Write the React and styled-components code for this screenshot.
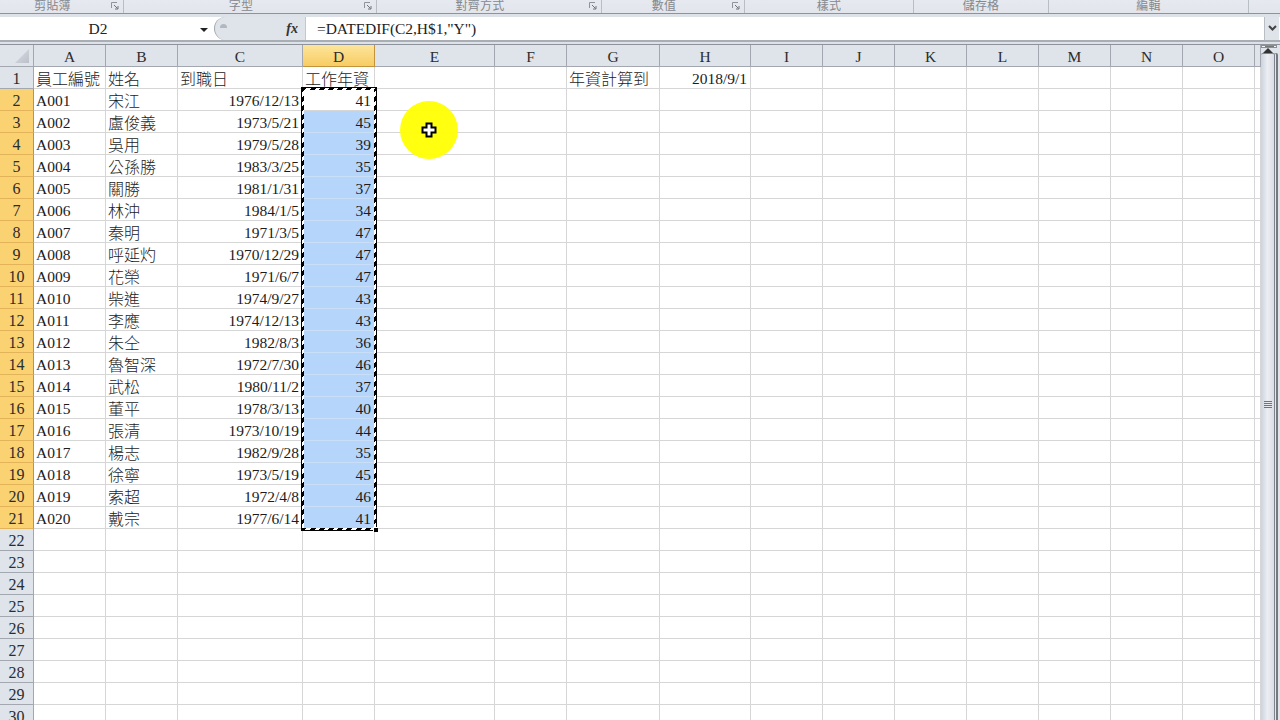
import React from "react";
import styled, { createGlobalStyle } from "styled-components";

const GlobalStyle = createGlobalStyle`
  html, body {
    margin: 0;
    padding: 0;
    background: #fff;
  }
`;

const LATIN = `"Liberation Serif", "Noto Sans CJK TC", serif`;
const CJK = `"Noto Sans CJK TC", "Liberation Serif", sans-serif`;

const Window = styled.div`
  position: relative;
  width: 1280px;
  height: 720px;
  overflow: hidden;
  display: flex;
  flex-direction: column;
  background: #fff;
  color: #000;
`;

const Ribbon = styled.div`
  display: flex;
  height: 13px;
  overflow: hidden;
  background: linear-gradient(#e6e9ef, #e2e5eb);
  border-bottom: 1px solid #8e939b;
`;

const RibbonGroup = styled.div`
  position: relative;
  box-sizing: border-box;
  width: ${(p) => p.$width}px;
  padding-right: ${(p) => (p.$launcher ? 18 : 0)}px;
  display: flex;
  justify-content: center;
  align-items: flex-end;
  border-right: 1px solid #b9bdc4;
  font: 12px/17px ${CJK};
  color: #85888e;
  letter-spacing: 0.2px;
  &:last-child {
    border-right: 0;
    flex: 1;
  }
`;

const Launcher = styled.svg`
  position: absolute;
  right: 4px;
  top: 2px;
  width: 8px;
  height: 8px;
`;

const FormulaBar = styled.div`
  height: 31px;
  box-sizing: border-box;
  padding-top: 3px;
  display: flex;
  background: #dde1e8;
  border-bottom: 1px solid #8e939b;
`;

const FormulaRow = styled.div`
  flex: 1;
  height: 23px;
  display: flex;
  background: #fff;
  border-bottom: 2px solid #a9adb4;
`;

const NameBox = styled.div`
  position: relative;
  width: 214px;
  box-sizing: border-box;
  padding-right: 18px;
  display: flex;
  align-items: center;
  justify-content: center;
  font: 15.5px ${LATIN};
  color: #222;
`;

const NameArrow = styled.span`
  position: absolute;
  right: 6px;
  top: 11px;
  border-left: 4px solid transparent;
  border-right: 4px solid transparent;
  border-top: 4px solid #222;
`;

const FxPanel = styled.div`
  width: 92px;
  display: flex;
  align-items: center;
  justify-content: flex-end;
  padding-right: 7px;
  box-sizing: border-box;
  background: #dfe3ea;
  border-left: 1px solid #a3a7ae;
  border-radius: 12px 0 0 12px;
  border-right: 1px solid #c3c7ce;
`;

const GripDot = styled.span`
  width: 7px;
  height: 4px;
  margin: 0 auto 5px 5px;
  border-radius: 4px 4px 0 0;
  background: #b3b8c0;
`;

const FxIcon = styled.span`
  font: italic bold 14px ${LATIN};
  color: #333;
`;

const FormulaInput = styled.div`
  flex: 1;
  padding-left: 11px;
  display: flex;
  align-items: center;
  font: 15.5px ${LATIN};
  letter-spacing: -0.05px;
  color: #222;
`;

const ExpandButton = styled.div`
  width: 14px;
  margin-right: 1px;
  display: flex;
  align-items: center;
  justify-content: center;
  background: #dfe3ea;
  border-left: 1px solid #b9bdc4;
`;

const SheetArea = styled.div`
  display: flex;
  flex: 1;
  min-height: 0;
`;

const Sheet = styled.div`
  position: relative;
  width: 1260px;
  display: grid;
  grid-template-columns: 34px 72px 72px 125px 72px 120px 72px 93px 91px 72px 72px 72px 72px 72px 72px 72px 6px;
  grid-auto-rows: 22px;
`;

const Corner = styled.div`
  display: flex;
  align-items: flex-end;
  justify-content: flex-end;
  padding: 0 4px 3px 0;
  background: #dfe3ea;
  border-right: 1px solid #a2a7b0;
  border-bottom: 1px solid #a2a7b0;
`;

const CornerMark = styled.span`
  width: 14px;
  height: 14px;
  background: linear-gradient(135deg, #d8dce3, #bcc1c9);
  clip-path: polygon(100% 0, 100% 100%, 0 100%);
`;

const ColHead = styled.div`
  display: flex;
  align-items: center;
  justify-content: center;
  padding-top: 3px;
  font: 15.5px/16px ${LATIN};
  color: #2c2c2c;
  background: ${(p) =>
    p.$active ? "linear-gradient(#fce59c, #f8cc62)" : "#dfe3ea"};
  border-right: 1px solid ${(p) => (p.$active ? "#c2933d" : "#a2a7b0")};
  border-bottom: 1px solid ${(p) => (p.$active ? "#c2933d" : "#a2a7b0")};
`;

const RowHead = styled.div`
  display: flex;
  align-items: flex-end;
  justify-content: center;
  font: 16px/18px ${LATIN};
  color: #2c2c2c;
  background: ${(p) => (p.$active ? "#fbd272" : "#dfe3ea")};
  border-right: 1px solid ${(p) => (p.$active ? "#c2933d" : "#a2a7b0")};
  border-bottom: 1px solid ${(p) => (p.$active ? "#e2b358" : "#a2a7b0")};
`;

const Cell = styled.div`
  box-sizing: border-box;
  min-width: 0;
  display: flex;
  align-items: flex-end;
  justify-content: ${(p) => (p.$right ? "flex-end" : "flex-start")};
  padding: 0 ${(p) => (p.$right ? 3 : 0)}px 0 ${(p) => (p.$right ? 0 : 2)}px;
  white-space: nowrap;
  font: ${(p) => (p.$cjk ? `16px/19px ${CJK}` : `15.5px/18px ${LATIN}`)};
  font-weight: ${(p) => (p.$cjk ? 300 : 400)};
  color: #1c1c1c;
  background: ${(p) => (p.$selected ? "#b5d5fb" : "transparent")};
  border-right: 1px solid ${(p) => (p.$selected ? "#b5d5fb" : "#d6d6d6")};
  border-bottom: 1px solid ${(p) => (p.$selected ? "#c9def7" : "#d6d6d6")};
`;

const Marching = styled.div`
  position: absolute;
  grid-column: 5 / 6;
  grid-row: 3 / 23;
  inset: -2px;
  pointer-events: none;
  border: 1px solid #000;
  background-image:
    repeating-linear-gradient(135deg, #000 0 3.5px, #fff 3.5px 6.5px),
    repeating-linear-gradient(135deg, #000 0 3.5px, #fff 3.5px 6.5px),
    repeating-linear-gradient(135deg, #000 0 3.5px, #fff 3.5px 6.5px),
    repeating-linear-gradient(135deg, #000 0 3.5px, #fff 3.5px 6.5px);
  background-size: 100% 2px, 100% 2px, 2px 100%, 2px 100%;
  background-position: top, bottom, left, right;
  background-repeat: no-repeat;
`;

const FillHandle = styled.span`
  position: absolute;
  right: -2px;
  bottom: -2px;
  width: 4px;
  height: 4px;
  background: #000;
  border: 1px solid #fff;
  border-right: 0;
  border-bottom: 0;
`;

const Spotlight = styled.div`
  position: absolute;
  left: 400px;
  top: 101px;
  width: 58px;
  height: 58px;
  border-radius: 50%;
  display: flex;
  align-items: center;
  justify-content: center;
  background: rgba(255, 255, 0, 0.94);
`;

const Scrollbar = styled.div`
  width: 20px;
  display: flex;
  flex-direction: column;
  overflow: hidden;
  background: #dfe3ea;
  border-left: 1px solid #74787f;
  box-sizing: border-box;
`;

const SplitBox = styled.div`
  height: 6px;
  margin-right: 3px;
  display: flex;
  align-items: center;
  justify-content: center;
  background: #f3f5f8;
  border: 1px solid #8a8f97;
`;

const SplitDash = styled.span`
  width: 9px;
  height: 1px;
  background: #777;
`;

const ArrowUp = styled.div`
  height: 17px;
  padding-right: 6px;
  display: flex;
  align-items: center;
  justify-content: center;
  &::before {
    content: "";
    border-left: 5px solid transparent;
    border-right: 5px solid transparent;
    border-bottom: 5px solid #333;
  }
`;

const Thumb = styled.div`
  flex: none;
  height: 702px;
  box-sizing: border-box;
  width: 14px;
  display: flex;
  flex-direction: column;
  align-items: center;
  justify-content: center;
  gap: 1px;
  background: linear-gradient(90deg, #cdd2dc, #eceef4 50%, #d9dce6);
  border: 1px solid #7d828b;
  border-left: 0;
  border-top-left-radius: 2px;
  border-top-right-radius: 2px;
  box-shadow: 1px 0 0 #e3e6ec, 3px 0 0 #74787f;
`;

const GripLine = styled.span`
  width: 8px;
  height: 1px;
  background: #6f737b;
`;

const groups = [
  { label: "剪貼簿", width: 124, launcher: true },
  { label: "字型", width: 253, launcher: true },
  { label: "對齊方式", width: 225, launcher: true },
  { label: "數值", width: 143, launcher: true },
  { label: "樣式", width: 169 },
  { label: "儲存格", width: 135 },
  { label: "編輯", width: 200 },
  { label: "", width: 32 },
];

const columns = "ABCDEFGHIJKLMNO".split("");

const people = [
  ["A001", "宋江", "1976/12/13", 41],
  ["A002", "盧俊義", "1973/5/21", 45],
  ["A003", "吳用", "1979/5/28", 39],
  ["A004", "公孫勝", "1983/3/25", 35],
  ["A005", "關勝", "1981/1/31", 37],
  ["A006", "林沖", "1984/1/5", 34],
  ["A007", "秦明", "1971/3/5", 47],
  ["A008", "呼延灼", "1970/12/29", 47],
  ["A009", "花榮", "1971/6/7", 47],
  ["A010", "柴進", "1974/9/27", 43],
  ["A011", "李應", "1974/12/13", 43],
  ["A012", "朱仝", "1982/8/3", 36],
  ["A013", "魯智深", "1972/7/30", 46],
  ["A014", "武松", "1980/11/2", 37],
  ["A015", "董平", "1978/3/13", 40],
  ["A016", "張清", "1973/10/19", 44],
  ["A017", "楊志", "1982/9/28", 35],
  ["A018", "徐寧", "1973/5/19", 45],
  ["A019", "索超", "1972/4/8", 46],
  ["A020", "戴宗", "1977/6/14", 41],
];

function cellProps(row, col) {
  if (row === 1) {
    const head = {
      A: "員工編號",
      B: "姓名",
      C: "到職日",
      D: "工作年資",
      G: "年資計算到",
    };
    if (head[col]) return { text: head[col], cjk: true };
    if (col === "H") return { text: "2018/9/1", right: true };
    return {};
  }
  const person = people[row - 2];
  if (!person) return {};
  if (col === "A") return { text: person[0] };
  if (col === "B") return { text: person[1], cjk: true };
  if (col === "C") return { text: person[2], right: true };
  if (col === "D") return { text: person[3], right: true, selected: row > 2 };
  return {};
}

function SheetRow({ row }) {
  return (
    <>
      <RowHead $active={row >= 2 && row <= 21}>{row}</RowHead>
      {columns.map((col) => {
        const c = cellProps(row, col);
        return (
          <Cell key={col} $cjk={c.cjk} $right={c.right} $selected={c.selected}>
            {c.text}
          </Cell>
        );
      })}
      <Cell />
    </>
  );
}

function App() {
  const rows = Array.from({ length: 30 }, (_, i) => i + 1);

  return (
    <Window>
      <GlobalStyle />
      <Ribbon>
        {groups.map((g) => (
          <RibbonGroup key={g.label} $width={g.width} $launcher={g.launcher}>
            {g.label}
            {g.launcher && (
              <Launcher viewBox="0 0 8 8">
                <path d="M0.5 6V0.5H6" fill="none" stroke="#8f949c" />
                <path d="M3 3l3.5 3.5M7 4v3H4" fill="none" stroke="#6e737b" />
              </Launcher>
            )}
          </RibbonGroup>
        ))}
      </Ribbon>

      <FormulaBar>
        <FormulaRow>
          <NameBox>
            D2
            <NameArrow />
          </NameBox>
          <FxPanel>
            <GripDot />
            <FxIcon>fx</FxIcon>
          </FxPanel>
          <FormulaInput>=DATEDIF(C2,H$1,"Y")</FormulaInput>
          <ExpandButton>
            <svg width="9" height="7" viewBox="0 0 9 7">
              <path d="M1 1l3.5 3.5L8 1" fill="none" stroke="#444" strokeWidth="2" />
            </svg>
          </ExpandButton>
        </FormulaRow>
      </FormulaBar>

      <SheetArea>
        <Sheet>
          <Corner>
            <CornerMark />
          </Corner>
          {columns.map((col) => (
            <ColHead key={col} $active={col === "D"}>
              {col}
            </ColHead>
          ))}
          <ColHead />
          {rows.map((row) => (
            <SheetRow key={row} row={row} />
          ))}
          <Marching>
            <FillHandle />
          </Marching>
        </Sheet>
        <Scrollbar>
          <SplitBox>
            <SplitDash />
          </SplitBox>
          <ArrowUp />
          <Thumb>
            <GripLine />
            <GripLine />
            <GripLine />
            <GripLine />
          </Thumb>
        </Scrollbar>
      </SheetArea>

      <Spotlight>
        <svg width="16" height="16" viewBox="0 0 16 16">
          <path
            d="M5.5 1.5h5v4h4v5h-4v4h-5v-4h-4v-5h4z"
            fill="#fff"
            stroke="#000"
            strokeWidth="2"
          />
        </svg>
      </Spotlight>
    </Window>
  );
}

export default App;
